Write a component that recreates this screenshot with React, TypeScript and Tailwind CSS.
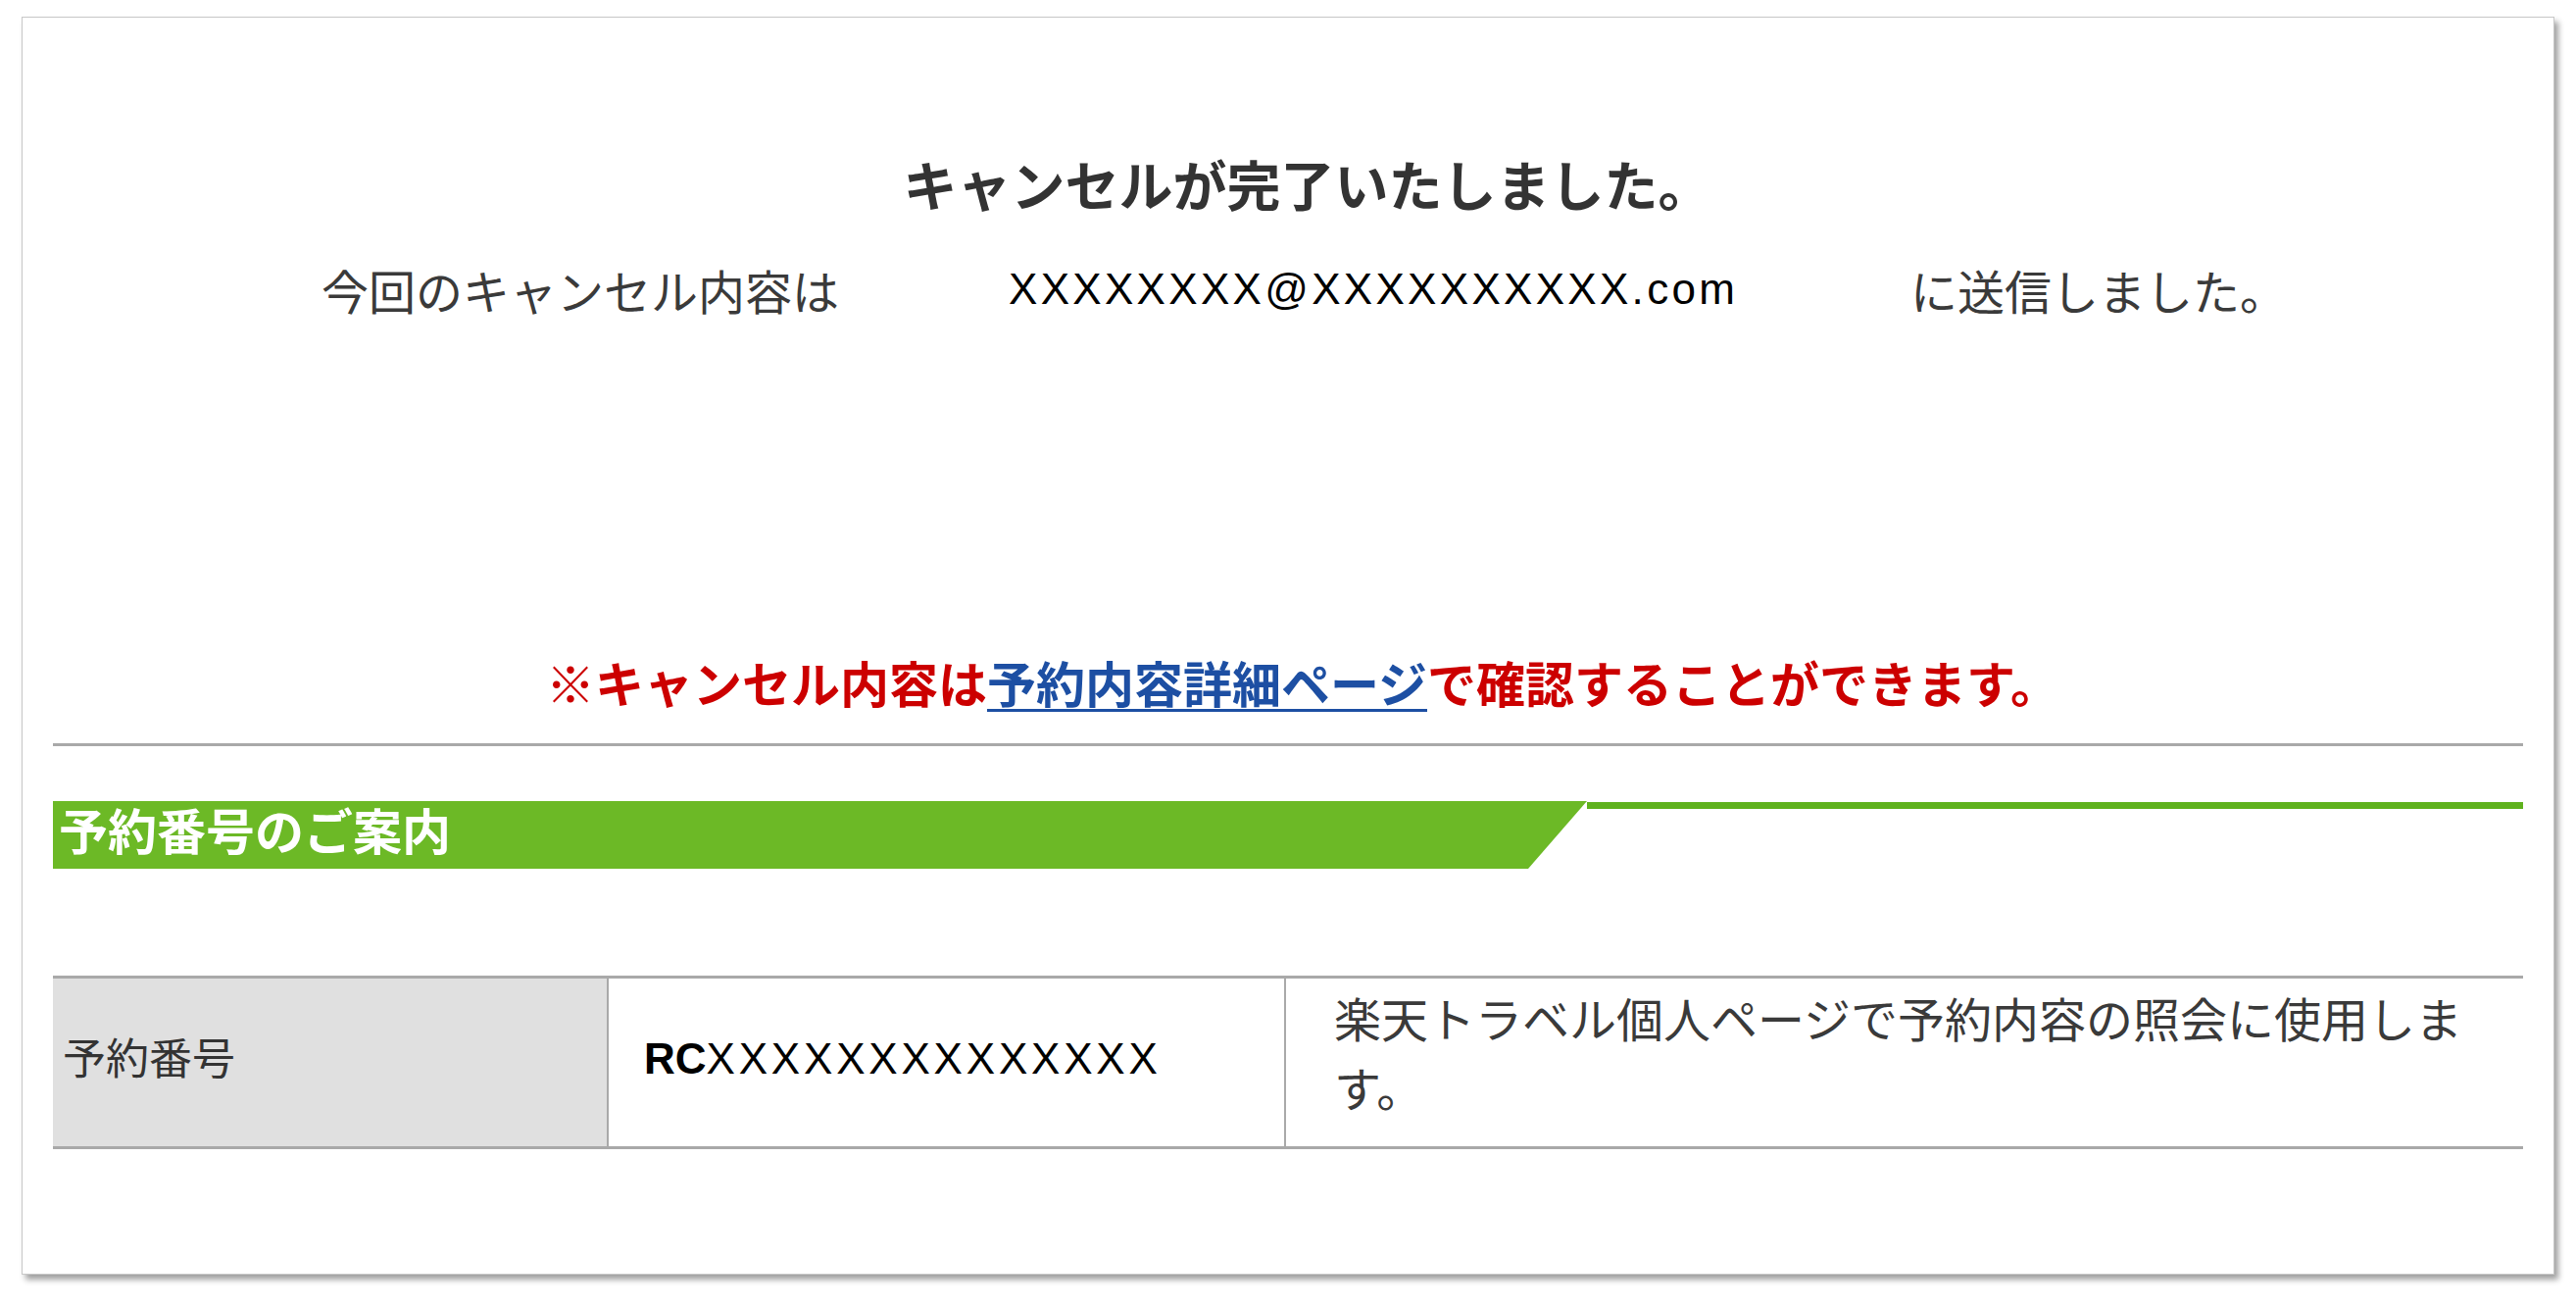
import React from "react";

const jp = { fontFamily: '"Noto Sans CJK JP", "Noto Sans", sans-serif' };
const latin = { fontFamily: '"Liberation Sans", Arial, "Noto Sans CJK JP", sans-serif' };

export default function App() {
  return (
    <div className="w-[2628px] h-[1334px] bg-white pt-[17px] pl-[22px]" style={jp}>
      <div className="w-[2584px] h-[1283px] bg-white border border-[#c8c8c8] shadow-[4px_5px_6px_rgba(0,0,0,0.38)] px-[31px] pt-[136px]">
        {/* Title */}
        <div className="pl-[40px] text-center text-[55px] leading-[64px] font-bold text-[#333333]">
          キャンセルが完了いたしました。
        </div>

        {/* Sent line */}
        <div className="mt-[45px] flex items-center pl-[274px] text-[48px] leading-[64px] text-[#3a3a3a] whitespace-nowrap">
          <span className="w-[530px]">今回のキャンセル内容は</span>
          <span className="ml-[171px] w-[742px] text-[44px] tracking-[3.3px] text-black" style={latin}>
            XXXXXXXX@XXXXXXXXXX.com
          </span>
          <span className="ml-[178px]">に送信しました。</span>
        </div>

        {/* Red notice */}
        <div className="mt-[336px] pl-[30px] text-center text-[50px] leading-[64px] font-bold text-[#cc0000] whitespace-nowrap">
          ※キャンセル内容は
          <a href="#" className="text-[#1d4fa3] underline decoration-[3px] underline-offset-[6px]">
            予約内容詳細ページ
          </a>
          で確認することができます。
        </div>

        {/* Divider */}
        <div className="mt-[31px] h-[3px] bg-[#a9a9a9]" />

        {/* Green heading */}
        <div className="mt-[56px] flex h-[69px]">
          <div className="w-[1565px] h-[69px] bg-[#6cb926] [clip-path:polygon(0_0,100%_0,calc(100%-60px)_100%,0_100%)] pl-[6px]">
            <span className="block text-[50px] leading-[56px] font-bold text-white">予約番号のご案内</span>
          </div>
          <div className="flex-1">
            <div className="mt-[1px] h-[7px] bg-[#5fb21d]" />
          </div>
        </div>

        {/* Table */}
        <div className="mt-[109px] grid grid-cols-[565px_691px_1fr] h-[177px] border-y-[3px] border-[#a9a9a9]">
          <div className="bg-[#e0e0e0] flex items-center pl-[10px] pb-[14px] text-[44px] text-[#333333]">
            予約番号
          </div>
          <div className="border-l-2 border-[#a9a9a9] flex items-center pl-[36px] pb-[8px] text-[44px] text-black whitespace-nowrap" style={latin}>
            <span className="font-bold">RC</span>
            <span className="tracking-[3.8px]">XXXXXXXXXXXXXX</span>
          </div>
          <div className="border-l-2 border-[#a9a9a9] flex items-center pl-[49px] pr-[20px] pb-[21px] text-[48px] leading-[71px] text-[#3a3a3a]">
            <span>楽天トラベル個人ページで予約内容の照会に使用します。</span>
          </div>
        </div>
      </div>
    </div>
  );
}
